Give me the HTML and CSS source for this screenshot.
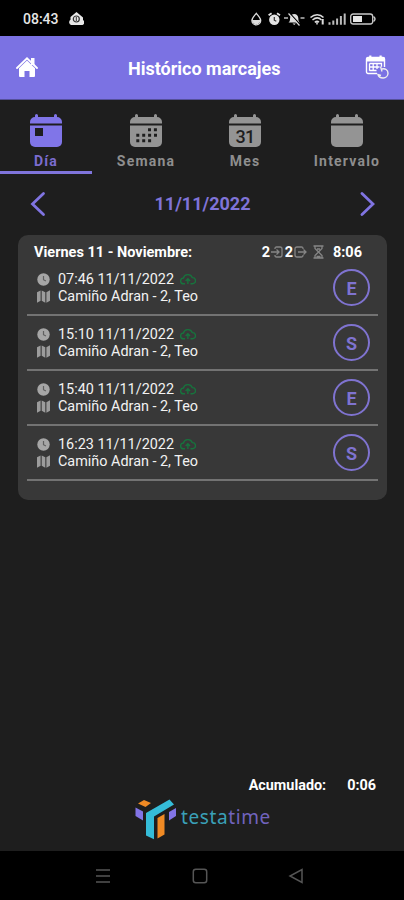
FILE: index.html
```html
<!DOCTYPE html>
<html lang="es">
<head>
  <meta charset="UTF-8" />
  <meta name="viewport" content="width=device-width, initial-scale=1.0"/>
  <title>Histórico marcajes</title>
  <link rel="stylesheet" href="styles.css">
</head>
<body>

  <!-- shared icons -->
  <svg class="sprite" aria-hidden="true">
    <symbol id="clock" viewBox="0 0 13 13">
      <circle cx="6.5" cy="6.5" r="6.2" fill="#a6a6a6"/>
      <path d="M6.5 3v3.7l2.4 1.4" fill="none" stroke="#606060" stroke-width="1.2"/>
    </symbol>
    <symbol id="map" viewBox="0 0 13 13">
      <path d="M0 2.2L3.6.4v10.4L0 12.8zM4.7.4l3.6 1.9v10.5l-3.6-2zM9.4 2.3L13 .2v10.6l-3.6 2z" fill="#9c9c9c"/>
    </symbol>
    <symbol id="cloud" viewBox="0 0 16 12">
      <path d="M5 10.8H3.6A2.9 2.9 0 0 1 3.4 5 4.7 4.7 0 0 1 12.3 4.6A3.1 3.1 0 0 1 12.5 10.8H10.5M7.9 11V6M5.7 8l2.2-2.2L10.1 8" fill="none" stroke="#17733d" stroke-width="1.4"/>
    </symbol>
    <symbol id="calendar" viewBox="0 0 34 34">
      <path d="M1 9.5V8a5 5 0 0 1 5-5V1.500a1.500 1.500 0 0 1 3 0V3h16V1.500a1.500 1.500 0 0 1 3 0V3a5 5 0 0 1 5 5v1.500z"/>
      <path d="M1 11.500h32V28a5 5 0 0 1-5 5H6a5 5 0 0 1-5-5z"/>
    </symbol>
  </svg>

  <div class="statusbar">
    <span class="time">08:43</span>
    <svg class="cloud-home" width="15" height="14" viewBox="0 0 15 14">
      <path d="M7.500 0L14 5.500V8a2.800 2.800 0 0 1-.5 5H2a3 3 0 0 1-.5-5.300V5z" fill="#e8e8e8"/>
      <circle cx="7.300" cy="7" r="3" fill="none" stroke="#333" stroke-width="1.200"/>
      <path d="M7.300 5v4" stroke="#333" stroke-width="1"/>
    </svg>
    <svg class="status-icons" width="126" height="14" viewBox="0 0 126 14">
      <path d="M5.300 1.300C7 3.600 9.700 5.800 9.700 8.400a4.400 4.400 0 0 1-8.800 0C.9 5.800 3.600 3.600 5.300 1.300z" fill="none" stroke="#ddd" stroke-width="1.300"/>
      <path d="M1 8h8.600a4.300 4.300 0 0 1-8.600 0z" fill="#ddd"/>
      <circle cx="23.300" cy="7.800" r="5.200" fill="#e4e4e4"/>
      <path d="M17.600 3.200l3-2M29 3.200l-3-2" stroke="#e4e4e4" stroke-width="1.800"/>
      <path d="M23.300 5v3.200l2 1" fill="none" stroke="#333" stroke-width="1.200"/>
      <path d="M37.500 10.500c1.500-1 1.500-2.500 1.600-4.500.3-2.500 1.900-4 4.100-4s3.800 1.500 4.100 4c.1 2 .1 3.500 1.600 4.500zM41.500 11.500h3.400l-1.700 1.500z" fill="#ddd"/>
      <path d="M38.500 1l11 12" stroke="#000" stroke-width="1.200"/>
      <path d="M37.500 1.500l11 12" stroke="#ddd" stroke-width="1.200"/>
      <path d="M33 6h4M49.500 6h4" stroke="#bbb" stroke-width="1.600"/>
      <path d="M59.500 5.500c4-3.700 9.500-3.700 13 0M61.500 8c3-2.600 6.500-2.600 9 0M63.800 10.300c1.500-1.200 3-1.200 4.200 0M66 12.500v-2" fill="none" stroke="#ddd" stroke-width="1.500"/>
      <path d="M71.700 12.500V7" stroke="#ddd" stroke-width="2"/>
      <path d="M78.500 12.700v-2.400M82.300 12.700V8.500M86.100 12.700V6.400M89.900 12.700V4M93.700 12.700V1.500" stroke="#bbb" stroke-width="2"/>
      <rect x="99.700" y="2" width="22" height="10" rx="2.500" fill="none" stroke="#c8c8c8" stroke-width="1.300"/>
      <rect x="102" y="4" width="9" height="6" fill="#e6e6e6"/>
      <path d="M122.500 4.500q3 2.500 0 5" fill="none" stroke="#c8c8c8" stroke-width="1.500"/>
    </svg>
  </div>

  <header class="appbar">
    <svg class="home" width="22" height="21" viewBox="0 0 22 21">
      <path d="M15 1h3.500v7H15z" fill="#fff"/>
      <path d="M1 11L11 1.300 21 11" fill="none" stroke="#fff" stroke-width="1.800" stroke-linecap="round"/>
      <path d="M11 3.500l8 7.700V19a1 1 0 0 1-1 1h-4.500v-6h-5v6H4a1 1 0 0 1-1-1v-7.800z" fill="#fff"/>
    </svg>
    <h1>Histórico marcajes</h1>
    <svg class="cal-touch" width="24" height="25" viewBox="0 0 24 25">
      <path d="M12 18.500H3A1.500 1.500 0 0 1 1.500 17V4A1.500 1.500 0 0 1 3 2.500h15A1.500 1.500 0 0 1 19.500 4v8" fill="none" stroke="#fff" stroke-width="1.400"/>
      <path d="M1.500 2.500h18v4h-18zM4.200.5h2.200v3H4.200zM14.500.5h2.200v3h-2.200z" fill="#fff"/>
      <path d="M4.500 8.500h12v3.200M4.500 12h10M4.500 15.500h7M4.500 8.500v7.200M8.200 8.500v7.200M12 8.500v5.500" fill="none" stroke="#fff" stroke-width="1.300"/>
      <path d="M15.500 11.500l1.500 5M17 14c3-1 6 1 6 4.200a4.800 4.800 0 0 1-4.800 4.800c-2.500 0-4.700-1.300-5.200-3.500l3 1" fill="none" stroke="#eee" stroke-width="1.400"/>
    </svg>
  </header>

  <nav class="tabs">
    <div class="tab active">
      <svg width="34" height="34" viewBox="0 0 34 34">
        <use href="#calendar"/>
        <rect x="6" y="14" width="8" height="8" fill="#1e1e1e"/>
      </svg>
      <span>Día</span>
    </div>
    <div class="tab">
      <svg width="34" height="34" viewBox="0 0 34 34">
        <use href="#calendar"/>
        <path d="M19 15.700h10M7.300 21.200h21.500M7.300 26.700h15.500" stroke="#1e1e1e" stroke-width="3" stroke-dasharray="3 2.900"/>
      </svg>
      <span>Semana</span>
    </div>
    <div class="tab">
      <svg width="34" height="34" viewBox="0 0 34 34">
        <use href="#calendar"/>
        <text class="cal-day" x="17" y="28.500" text-anchor="middle">31</text>
      </svg>
      <span>Mes</span>
    </div>
    <div class="tab">
      <svg width="34" height="34" viewBox="0 0 34 34"><use href="#calendar"/></svg>
      <span>Intervalo</span>
    </div>
  </nav>

  <div class="datebar">
    <svg width="16" height="26" viewBox="0 0 16 26"><path d="M13.500 2.500L2.500 13l11 10.500"/></svg>
    <span>11/11/2022</span>
    <svg width="16" height="26" viewBox="0 0 16 26"><path d="M3 2.500L14 13 3 23.500"/></svg>
  </div>

  <section class="card">
    <div class="card-head">
      <span class="day">Viernes 11 - Noviembre:</span>
      <span class="count">2</span>
      <svg width="13" height="12" viewBox="0 0 13 12"><path d="M0 6h8M5.500 3.500L8 6 5.500 8.500M4 3V2.500Q4 1 5.500 1H9q2 0 2 2v6q0 2-2 2H5.500Q4 11 4 9.500V9"/></svg>
      <span class="count">2</span>
      <svg width="13" height="12" viewBox="0 0 13 12"><path d="M4 6h8M9.500 3.500L12 6 9.500 8.500M9 3V2.500Q9 1 7.500 1H3Q1 1 1 3v6q0 2 2 2h4.500Q9 11 9 9.500V9"/></svg>
      <svg class="hourglass" width="11" height="14" viewBox="0 0 11 14"><path d="M.5 1h10M.5 13h10M2 1v2.500L5.500 7 9 3.500V1M2 13v-2.500L5.500 7 9 10.500V13M3.500 11.500h4M4 4h3"/></svg>
      <span class="total">8:06</span>
    </div>

    <div class="row">
      <div class="info">
        <p><svg class="ico"><use href="#clock"/></svg><span class="stamp">07:46 11/11/2022</span><svg class="sync"><use href="#cloud"/></svg></p>
        <p><svg class="ico"><use href="#map"/></svg><span class="place">Camiño Adran - 2, Teo</span></p>
      </div>
      <div class="badge">E</div>
    </div>
    <div class="row">
      <div class="info">
        <p><svg class="ico"><use href="#clock"/></svg><span class="stamp">15:10 11/11/2022</span><svg class="sync"><use href="#cloud"/></svg></p>
        <p><svg class="ico"><use href="#map"/></svg><span class="place">Camiño Adran - 2, Teo</span></p>
      </div>
      <div class="badge">S</div>
    </div>
    <div class="row">
      <div class="info">
        <p><svg class="ico"><use href="#clock"/></svg><span class="stamp">15:40 11/11/2022</span><svg class="sync"><use href="#cloud"/></svg></p>
        <p><svg class="ico"><use href="#map"/></svg><span class="place">Camiño Adran - 2, Teo</span></p>
      </div>
      <div class="badge">E</div>
    </div>
    <div class="row">
      <div class="info">
        <p><svg class="ico"><use href="#clock"/></svg><span class="stamp">16:23 11/11/2022</span><svg class="sync"><use href="#cloud"/></svg></p>
        <p><svg class="ico"><use href="#map"/></svg><span class="place">Camiño Adran - 2, Teo</span></p>
      </div>
      <div class="badge">S</div>
    </div>
  </section>

  <footer class="summary">
    <div class="accumulated">
      <span>Acumulado:</span>
      <span>0:06</span>
    </div>
    <div class="brand">
      <svg width="42" height="42" viewBox="0 0 42 42">
        <path d="M3 4.500L9 1l7 3-5.500 4z" fill="#f08a24"/>
        <path d="M.5 8.500l7.500 4v9l-7.500-4.500z" fill="#8274e6"/>
        <path d="M11 14L34.500.5 39 5.500 19 17.500v22.700l-8-3.700z" fill="#35bcd8"/>
        <path d="M22.500 19l7-4v20.500l-7 4z" fill="#f08a24"/>
        <path d="M34 13l7-4v8l-7 4.500z" fill="#8274e6"/>
      </svg>
      <span class="wordmark"><span class="testa">testa</span><span class="time-word">time</span></span>
    </div>
  </footer>

  <div class="navbar">
    <svg width="16" height="16" viewBox="0 0 16 16"><path d="M1 2h14M1 8h14M1 14h14"/></svg>
    <svg width="16" height="16" viewBox="0 0 16 16"><rect x="1.300" y="1.300" width="13.400" height="13.400" rx="2.500"/></svg>
    <svg width="16" height="16" viewBox="0 0 16 16"><path d="M14 1.500v13L2 8z"/></svg>
  </div>

</body>
</html>
```
FILE: styles.css
```css
* {
  box-sizing: border-box;
}

body {
  margin: 0;
  height: 900px;
  display: flex;
  flex-direction: column;
  background: #1e1e1e;
  color: #fff;
  font-family: Roboto, sans-serif;
  overflow: hidden;
}

svg {
  display: block;
  flex-shrink: 0;
}

.sprite {
  display: none;
}

.statusbar {
  height: 36px;
  padding: 2px 27px 0 23px;
  display: flex;
  align-items: center;
  background: #000;
}

.time {
  width: 46px;
  font-size: 14px;
  font-weight: 500;
  color: #e6e6e6;
}

.status-icons {
  margin-left: auto;
}

.appbar {
  height: 64px;
  padding: 0 15px 0 16px;
  display: flex;
  align-items: center;
  background: #7b72e3;
  border-bottom: 1px solid #55509a;
}

.appbar h1 {
  margin: 1px auto 0 90px;
  font-size: 18px;
  font-weight: 700;
}

.tabs {
  height: 74px;
  display: grid;
  grid-template-columns: 92px 108px 90px 114px;
}

.tab {
  padding-top: 14px;
  display: flex;
  flex-direction: column;
  align-items: center;
  gap: 5px;
  color: #8e8e8e;
  fill: #949494;
  font-size: 14px;
  line-height: 17px;
  font-weight: 700;
  letter-spacing: 1.2px;
}

.tab.active {
  color: #7b6ccf;
  fill: #8075e8;
  border-bottom: 3px solid #8075dc;
}

.cal-day {
  font-size: 18px;
  font-weight: 500;
  letter-spacing: -0.8px;
  fill: #1e1e1e;
}

.datebar {
  height: 61px;
  padding: 0 29px 2px 30px;
  display: flex;
  align-items: center;
  justify-content: space-between;
  color: #8074d8;
  font-size: 18px;
  font-weight: 700;
}

.datebar path {
  fill: none;
  stroke: #8074e2;
  stroke-width: 2.8;
  stroke-linecap: round;
}

.card {
  height: 265px;
  margin: 0 17px 0 18px;
  padding: 0 9px;
  border-radius: 10px;
  background: #383838;
}

.card-head {
  height: 26px;
  padding: 8px 16px 0 7px;
  display: flex;
  align-items: center;
  font-size: 14.5px;
  font-weight: 700;
}

.card-head .day {
  margin-right: auto;
}

.card-head path {
  fill: none;
  stroke: #858585;
  stroke-width: 1.3;
}

.card-head .count {
  width: 10px;
  text-align: center;
}

.card-head .hourglass {
  margin: 0 9px 0 6px;
}

.row {
  height: 55px;
  padding: 0 8px 0 10px;
  display: flex;
  align-items: center;
  justify-content: space-between;
  border-bottom: 2px solid #737373;
}

.info p {
  height: 17px;
  margin: 0;
  display: flex;
  align-items: center;
  font-size: 14.4px;
  line-height: 17px;
  color: #f2f2f2;
  white-space: nowrap;
}

.ico {
  width: 13px;
  height: 13px;
  margin-right: 8px;
}

.sync {
  width: 16px;
  height: 12px;
  margin-left: 6px;
}

.badge {
  width: 37px;
  height: 37px;
  border: 2px solid #7f73d0;
  border-radius: 50%;
  display: flex;
  align-items: center;
  justify-content: center;
  padding-top: 1px;
  color: #7f73d0;
  font-size: 18px;
  font-weight: 700;
}

.summary {
  margin-top: auto;
}

.accumulated {
  padding-right: 28px;
  display: flex;
  justify-content: flex-end;
  gap: 21px;
  font-size: 14.4px;
  line-height: 18px;
  font-weight: 700;
}

.brand {
  height: 56px;
  padding: 4px 0 0 135px;
  display: flex;
  gap: 4px;
}

.wordmark {
  font-family: "Noto Sans", sans-serif;
  font-size: 19px;
  line-height: 37px;
  letter-spacing: 0.6px;
}

.testa {
  color: #3aa0b8;
}

.time-word {
  color: #7163bd;
}

.navbar {
  height: 49px;
  padding: 0 100px 0 95px;
  display: flex;
  align-items: center;
  justify-content: space-between;
  background: #000;
  fill: none;
  stroke: #555;
  stroke-width: 1.5;
}
```
